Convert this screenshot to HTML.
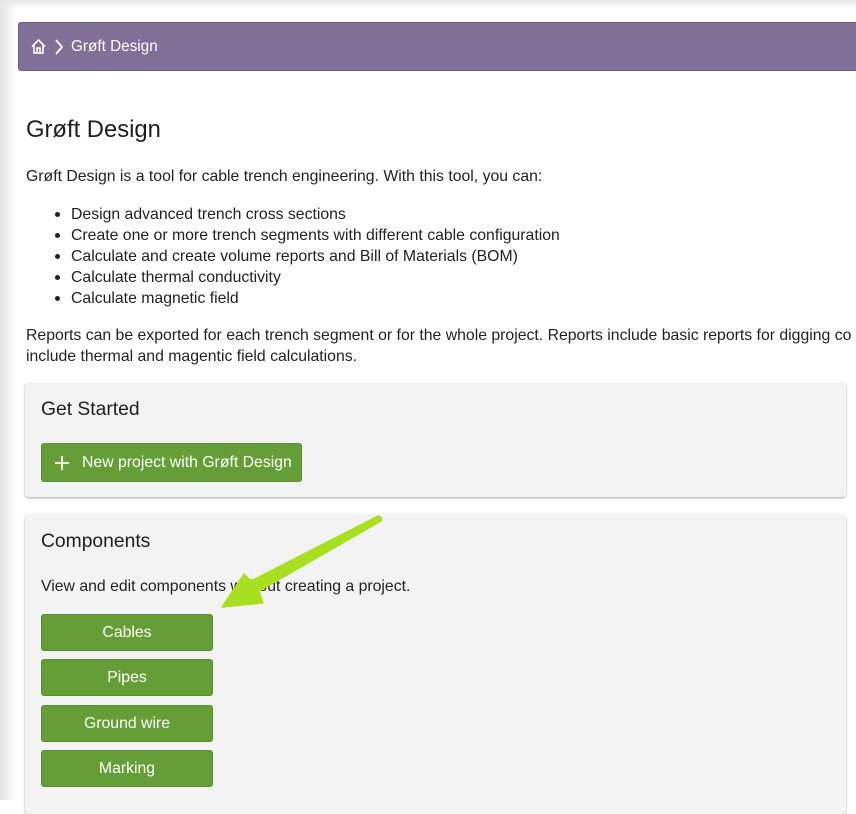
<!DOCTYPE html>
<html><head><meta charset="utf-8"><style>
*{margin:0;padding:0;box-sizing:border-box}
html,body{width:856px;height:800px;overflow:hidden;background:#fff;font-family:"Liberation Sans",sans-serif;color:#222}
.lshadow{position:absolute;left:0;top:0;width:16px;height:800px;background:linear-gradient(to right,#e4e4e4,#fff)}
.tshadow{position:absolute;left:0;top:0;width:856px;height:8px;background:linear-gradient(to bottom,#e6e6e6,rgba(255,255,255,0))}
.bar{position:absolute;left:18px;top:22px;width:850px;height:49px;background:#806f96;border:1px solid #6d5c84;border-radius:3px;color:#fff;font-size:15.3px}
.bar span{position:absolute;left:52px;top:15px}
h1{position:absolute;left:26px;top:116px;font-size:23.8px;font-weight:normal;color:#1e1e1e}
.p{position:absolute;left:26px;font-size:15.8px;line-height:21px;white-space:nowrap;color:#222}
ul{position:absolute;left:71px;top:204px;font-size:15.8px;line-height:21px;list-style:none}
ul li:before{content:"";position:absolute;left:-16px;width:5px;height:5px;border-radius:50%;background:#222;margin-top:8px}
.card{position:absolute;left:25px;width:821px;background:#f3f3f3;border-radius:3px;box-shadow:0 1px 2px rgba(0,0,0,.35)}
.card h2{position:absolute;left:16px;font-size:19.3px;font-weight:normal;color:#1e1e1e}
.btn{position:absolute;background:#659e37;border:1px solid #5a8e30;border-radius:3px;color:#fff;font-size:15.8px;text-align:center}
</style></head><body>
<div class="lshadow"></div><div class="tshadow"></div>
<div class="bar">
<svg style="position:absolute;left:11px;top:15px" width="17" height="17" viewBox="0 0 17 17" fill="none" stroke="#fff" stroke-width="1.6"><path d="M2 8.5L8.5 2L15 8.5M4 7v8h9V7M7 15v-5h3v5"/></svg>
<svg style="position:absolute;left:35px;top:16px" width="10" height="16" viewBox="0 0 10 16" fill="none" stroke="#fff" stroke-width="1.8"><path d="M2 1l6 7-6 7"/></svg>
<span>Grøft Design</span></div>
<h1>Grøft Design</h1>
<div class="p" style="top:166px">Grøft Design is a tool for cable trench engineering. With this tool, you can:</div>
<ul>
<li>Design advanced trench cross sections</li>
<li>Create one or more trench segments with different cable configuration</li>
<li>Calculate and create volume reports and Bill of Materials (BOM)</li>
<li>Calculate thermal conductivity</li>
<li>Calculate magnetic field</li>
</ul>
<div class="p" style="top:325px">Reports can be exported for each trench segment or for the whole project. Reports include basic reports for digging co<br>include thermal and magentic field calculations.</div>
<div class="card" style="top:383px;height:114px"><h2 style="top:16px">Get Started</h2>
<div class="btn" style="left:16px;top:60px;width:261px;height:39px;text-align:left;padding:10px 0 0 40px">New project with Grøft Design
<svg style="position:absolute;left:13px;top:12px" width="14" height="14" viewBox="0 0 14 14" stroke="#fff" stroke-width="1.8"><path d="M7 0v14M0 7h14"/></svg></div></div>
<div class="card" style="top:514px;height:300px"><h2 style="top:17px">Components</h2>
<div class="p" style="left:16px;top:62px">View and edit components without creating a project.</div>
<div class="btn" style="left:16px;top:100px;width:172px;height:37px;padding-top:9px">Cables</div>
<div class="btn" style="left:16px;top:145px;width:172px;height:37px;padding-top:9px">Pipes</div>
<div class="btn" style="left:16px;top:191px;width:172px;height:37px;padding-top:9px">Ground wire</div>
<div class="btn" style="left:16px;top:236px;width:172px;height:37px;padding-top:9px">Marking</div>
</div>
<svg style="position:absolute;left:0;top:0" width="856" height="800"><path d="M378 516 Q383 517 381 521 L259 591 L263 603 L222 607 L244 574 L251 581 Z" fill="#a8e021" stroke="#a8e021" stroke-width="1.5" stroke-linejoin="round"/></svg>
</body></html>
